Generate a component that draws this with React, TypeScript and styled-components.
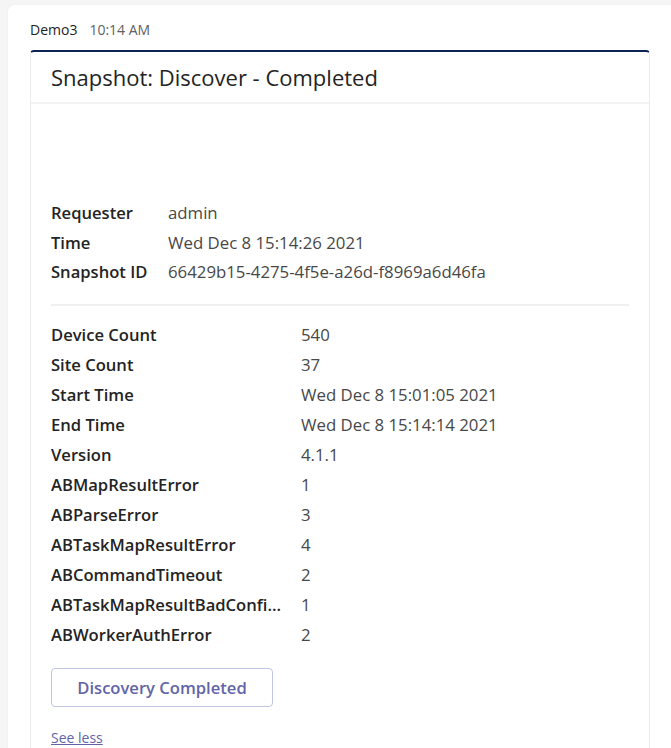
import React from "react";
import styled, { createGlobalStyle } from "styled-components";

const Global = createGlobalStyle`
  html, body { margin: 0; padding: 0; background: #f5f5f5; overflow: hidden; }
  body { font-family: "Open Sans", "Noto Sans", sans-serif; color: #242424; }
`;

const Page = styled.div`
  width: 671px;
  height: 748px;
  overflow: hidden;
  padding: 5px 0 0 8px;
  box-sizing: border-box;
`;

const Bubble = styled.div`
  width: 700px;
  min-height: 760px;
  background: #ffffff;
  border-radius: 6px;
  padding: 14px 0 0 22px;
  box-sizing: border-box;
  box-shadow: 0 0 2px rgba(0, 0, 0, 0.06);
`;

const Meta = styled.div`
  display: flex;
  align-items: baseline;
  gap: 12px;
  font-size: 14px;
  height: 22px;
  line-height: 22px;
`;

const Author = styled.span`
  color: #242424;
`;

const Stamp = styled.span`
  color: #616161;
`;

const Card = styled.div`
  margin-top: 9px;
  width: 620px;
  box-sizing: border-box;
  border: 1px solid #ececec;
  border-top: 2px solid #0c2454;
  border-radius: 4px 4px 0 0;
  background: #fff;
`;

const Header = styled.div`
  height: 50px;
  display: flex;
  align-items: center;
  padding: 0 20px;
  border-bottom: 2px solid #f3f3f3;
  font-size: 22px;
  font-weight: 400;
  color: #242424;
`;

const Body = styled.div`
  padding: 0 20px 0 20px;
`;

const Spacer = styled.div`
  height: 94px;
`;

const FactTable = styled.div<{ $labelWidth: number; $row: number }>`
  display: grid;
  grid-template-columns: ${(p) => p.$labelWidth}px 1fr;
  grid-auto-rows: ${(p) => p.$row}px;
  align-items: center;
`;

const Label = styled.div`
  font-size: 16.6px;
  font-weight: 600;
  color: #242424;
  white-space: nowrap;
  overflow: hidden;
  text-overflow: ellipsis;
  padding-right: 18px;
`;

const Value = styled.div`
  font-size: 16.8px;
  font-weight: 400;
  color: #484848;
  white-space: nowrap;
`;

const Divider = styled.div`
  height: 2px;
  background: #f0f0f0;
  margin: 17px 0 14px 0;
`;

const Button = styled.button`
  margin-top: 18px;
  width: 222px;
  height: 39px;
  border: 1px solid #c2c4e4;
  border-radius: 4px;
  background: #fff;
  color: #6264a7;
  font-family: inherit;
  font-size: 16.6px;
  font-weight: 600;
  cursor: pointer;
`;

const Link = styled.a`
  display: inline-block;
  margin-top: 21px;
  font-size: 14px;
  color: #6264a7;
  text-decoration: underline;
`;

const top = [
  ["Requester", "admin"],
  ["Time", "Wed Dec 8 15:14:26 2021"],
  ["Snapshot ID", "66429b15-4275-4f5e-a26d-f8969a6d46fa"],
];

const facts = [
  ["Device Count", "540"],
  ["Site Count", "37"],
  ["Start Time", "Wed Dec 8 15:01:05 2021"],
  ["End Time", "Wed Dec 8 15:14:14 2021"],
  ["Version", "4.1.1"],
  ["ABMapResultError", "1"],
  ["ABParseError", "3"],
  ["ABTaskMapResultError", "4"],
  ["ABCommandTimeout", "2"],
  ["ABTaskMapResultBadConfigurationError", "1"],
  ["ABWorkerAuthError", "2"],
];

export default function App() {
  return (
    <Page>
      <Global />
      <Bubble>
        <Meta>
          <Author>Demo3</Author>
          <Stamp>10:14 AM</Stamp>
        </Meta>
        <Card>
          <Header>Snapshot: Discover - Completed</Header>
          <Body>
            <Spacer />
            <FactTable $labelWidth={117} $row={29.5}>
              {top.map(([k, v]) => (
                <React.Fragment key={k}>
                  <Label>{k}</Label>
                  <Value>{v}</Value>
                </React.Fragment>
              ))}
            </FactTable>
            <Divider />
            <FactTable $labelWidth={250} $row={30}>
              {facts.map(([k, v]) => (
                <React.Fragment key={k}>
                  <Label>{k}</Label>
                  <Value>{v}</Value>
                </React.Fragment>
              ))}
            </FactTable>
            <Button>Discovery Completed</Button>
            <div>
              <Link href="#">See less</Link>
            </div>
          </Body>
        </Card>
      </Bubble>
    </Page>
  );
}
